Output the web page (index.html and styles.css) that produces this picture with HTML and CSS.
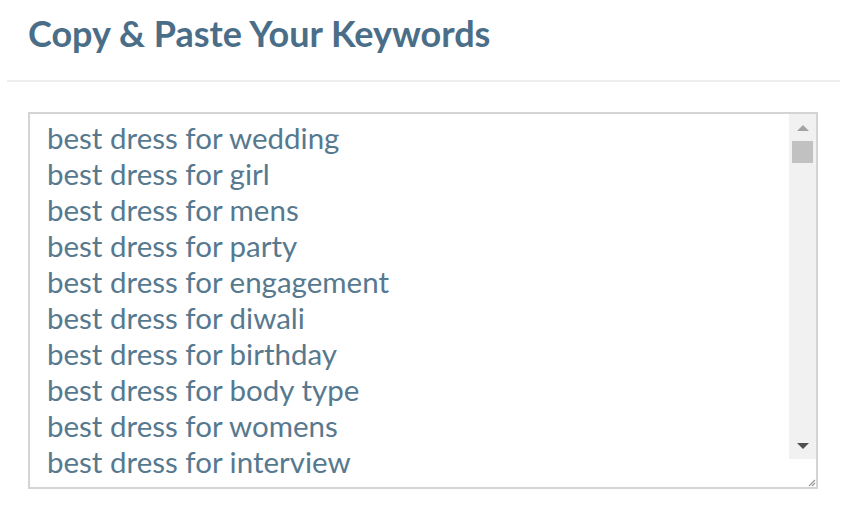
FILE: index.html
```html
<!DOCTYPE html>
<html>
<head>
<meta charset="utf-8">
<link rel="stylesheet" href="styles.css">
</head>
<body>
<div class="page">
  <h2 class="title">Copy &amp; Paste Your Keywords</h2>
  <div class="divider"></div>
  <div class="box">
    <div class="lines">
      <div class="line">best dress for wedding</div>
      <div class="line">best dress for girl</div>
      <div class="line">best dress for mens</div>
      <div class="line">best dress for party</div>
      <div class="line">best dress for engagement</div>
      <div class="line">best dress for diwali</div>
      <div class="line">best dress for birthday</div>
      <div class="line">best dress for body type</div>
      <div class="line">best dress for womens</div>
      <div class="line">best dress for interview</div>
      <div class="line">best dress for graduation</div>
    </div>
    <div class="scrollbar">
      <div class="arrow up"></div>
      <div class="track"><div class="thumb"></div></div>
      <div class="arrow down"></div>
      <div class="resizer">
        <svg width="10" height="10" viewBox="0 0 10 10"><path d="M9 3 L3 9 M9 6 L6 9" stroke="#999" stroke-width="1.2" fill="none"/></svg>
      </div>
    </div>
  </div>
</div>
</body>
</html>
```
FILE: styles.css
```css
html, body {
  margin: 0;
  padding: 0;
  background: #fff;
}
.page {
  width: 847px;
  height: 515px;
  font-family: Lato, "Open Sans", sans-serif;
}
.title {
  margin: 0;
  padding: 13px 0 0 28px;
  height: 65px;
  box-sizing: border-box;
  font-size: 36px;
  font-weight: 700;
  color: #4b6e88;
  line-height: 40px;
}
.divider {
  margin: 15px 7px 0 7px;
  height: 2px;
  background: #eeeeee;
}
.box {
  margin: 30px 0 0 28px;
  width: 790px;
  height: 377px;
  box-sizing: border-box;
  border: 2px solid #d4d4d4;
  display: flex;
  overflow: hidden;
}
.lines {
  flex: 1;
  padding: 6px 0 0 17px;
  overflow: hidden;
}
.line {
  font-size: 29.5px;
  line-height: 36px;
  color: #56798f;
  white-space: nowrap;
}
.scrollbar {
  width: 27px;
  display: flex;
  flex-direction: column;
  background: #f1f1f1;
}
.arrow {
  height: 27px;
  display: flex;
  align-items: center;
  justify-content: center;
}
.arrow::before {
  content: "";
  border-left: 6px solid transparent;
  border-right: 6px solid transparent;
}
.arrow.up::before {
  border-bottom: 6px solid #a3a3a3;
}
.arrow.down::before {
  border-top: 6px solid #505050;
}
.track {
  flex: 1;
  padding: 0 3px;
}
.thumb {
  height: 22px;
  background: #c1c1c1;
}
.resizer {
  height: 28px;
  background: #fff;
  display: flex;
  align-items: flex-end;
  justify-content: flex-end;
}
.resizer svg {
  display: block;
}
```
